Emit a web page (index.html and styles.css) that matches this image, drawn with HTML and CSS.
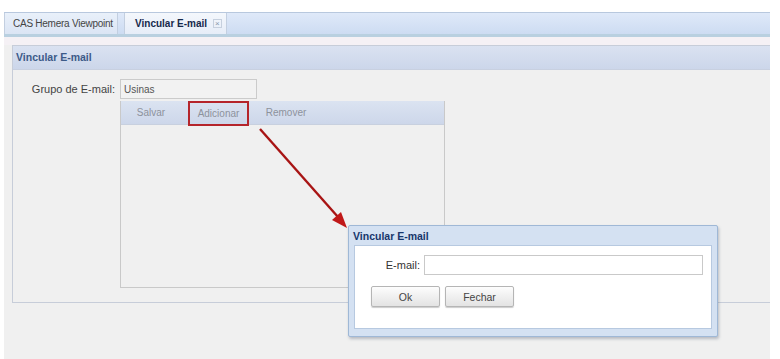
FILE: index.html
```html
<!DOCTYPE html>
<html lang="en">
<head>
  <meta charset="UTF-8">
  <title>Vincular E-mail</title>
  <link rel="stylesheet" href="styles.css">
</head>
<body>
  <div class="app">
    <div class="tabstrip">
      <div class="tab">CAS Hemera Viewpoint</div>
      <div class="tab active">Vincular E-mail <span class="tab-close">&times;</span></div>
    </div>
    <div class="strip-gap"></div>

    <div class="content">
      <div class="panel">
        <div class="panel-header">Vincular E-mail</div>
        <div class="panel-body">
          <div class="form-row">
            <label class="field-label">Grupo de E-mail:</label>
            <input class="field" type="text" value="Usinas">
          </div>
          <div class="grid">
            <div class="toolbar">
              <span class="tb-btn">Salvar</span>
              <span class="tb-btn highlight">Adicionar</span>
              <span class="tb-btn">Remover</span>
            </div>
            <div class="grid-body"></div>
          </div>
        </div>
      </div>
    </div>

    <svg class="arrow" width="95" height="106" viewBox="0 0 95 106">
      <line x1="4" y1="4" x2="82" y2="92" stroke="#a81414" stroke-width="2.4"/>
      <polygon points="91,103 76,95 85,87" fill="#c01818"/>
    </svg>

    <div class="dialog">
      <div class="dialog-header">Vincular E-mail</div>
      <div class="dialog-body">
        <div class="dialog-row">
          <label class="dialog-label">E-mail:</label>
          <input class="dialog-field" type="text">
        </div>
        <div class="dialog-buttons">
          <button class="btn">Ok</button>
          <button class="btn">Fechar</button>
        </div>
      </div>
    </div>
  </div>
</body>
</html>
```

FILE: styles.css
```css
body { margin: 0; background: #fff; font-family: "Liberation Sans", Arial, sans-serif; font-size: 10px; color: #333; }
.app { position: relative; margin: 12px 10px 0 4px; height: 347px; background: #f0f0f0; }

.tabstrip { display: flex; gap: 6px; height: 21px; background: linear-gradient(#dfe9f9, #cddcf2); border-top: 1px solid #b8c8de; border-bottom: 3px solid #b9d0e0; }
.tab { display: flex; align-items: center; height: 21px; width: 114px; box-sizing: border-box; padding-left: 8px; border-right: 1px solid #c3cfe0; border-left: 1px solid #c3cfe0; background: linear-gradient(#e9f0fa, #dbe5f4); color: #444; font-size: 10px; letter-spacing: -0.25px; }
.tab.active { width: 103px; padding-left: 10px; background: linear-gradient(#f4f7fc, #e6edf8); color: #15284b; font-weight: bold; font-size: 10px; letter-spacing: 0; }
.tab-close { margin-left: 6px; font-size: 8px; color: #8896ad; font-weight: normal; border: 1px solid #c6d0de; line-height: 7px; padding: 0 1px; }
.strip-gap { height: 8px; background: #f5f1f5; }

.content { padding-left: 8px; }
.panel { height: 256px; border: 1px solid #c7cdd9; border-right: none; background: #f0f0f0; }
.panel-header { height: 23px; line-height: 23px; padding-left: 3px; background: linear-gradient(#dae2f1, #ccd6ea); border-bottom: 1px solid #c8d0e0; color: #3c5a88; font-weight: bold; font-size: 10.5px; }
.panel-body { padding: 9px 0 0 0; }

.form-row { display: flex; align-items: center; gap: 5px; height: 20px; }
.field-label { width: 102px; text-align: right; font-size: 11px; color: #444; }
.field { width: 137px; height: 20px; box-sizing: border-box; margin: 0; padding: 0 3px; border: 1px solid #cbcbcb; background: #f2f2f2; font-family: inherit; font-size: 10px; color: #555; }

.grid { margin: 2px 0 0 107px; width: 323px; height: 186px; border: 1px solid #c9c9c9; border-top: none; }
.toolbar { display: flex; align-items: center; height: 23px; padding-left: 0; gap: 7px; background: linear-gradient(#dbe3f1, #cdd7ea); border-bottom: 1px solid #c8d0df; }
.tb-btn { width: 60px; text-align: center; line-height: 21px; color: #8d929c; font-size: 10px; }
.tb-btn.highlight { width: 61px; height: 25px; align-self: flex-start; border: 2px solid #b5252b; box-sizing: border-box; line-height: 21px; }
.grid-body { height: 162px; background: #f0f0f0; }

.arrow { position: absolute; left: 252px; top: 113px; }

.dialog { position: absolute; left: 344px; top: 213px; width: 368px; height: 110px; border: 1px solid #9fb8d6; border-radius: 2px; background: #d4e1f2; box-shadow: 1px 2px 3px rgba(80, 90, 110, 0.35); }
.dialog-header { height: 19px; line-height: 21px; padding-left: 4px; color: #17366b; font-weight: bold; font-size: 10.5px; }
.dialog-body { margin: 0 5px; height: 84px; background: #fff; border: 1px solid #b7c9e0; padding-top: 9px; box-sizing: border-box; }
.dialog-row { display: flex; align-items: center; gap: 4px; height: 20px; }
.dialog-label { width: 65px; text-align: right; font-size: 11px; color: #333; }
.dialog-field { width: 279px; height: 20px; box-sizing: border-box; margin: 0; border: 1px solid #c9c9c9; background: #fff; }
.dialog-buttons { display: flex; gap: 5px; margin: 11px 0 0 16px; }
.btn { width: 69px; height: 21px; border: 1px solid #b5b5b5; border-radius: 2px; background: linear-gradient(#fdfdfd, #e3e3e3); box-shadow: 0 1px 1px rgba(0,0,0,0.2); font-family: inherit; font-size: 10.5px; color: #444; padding: 0; }
```
